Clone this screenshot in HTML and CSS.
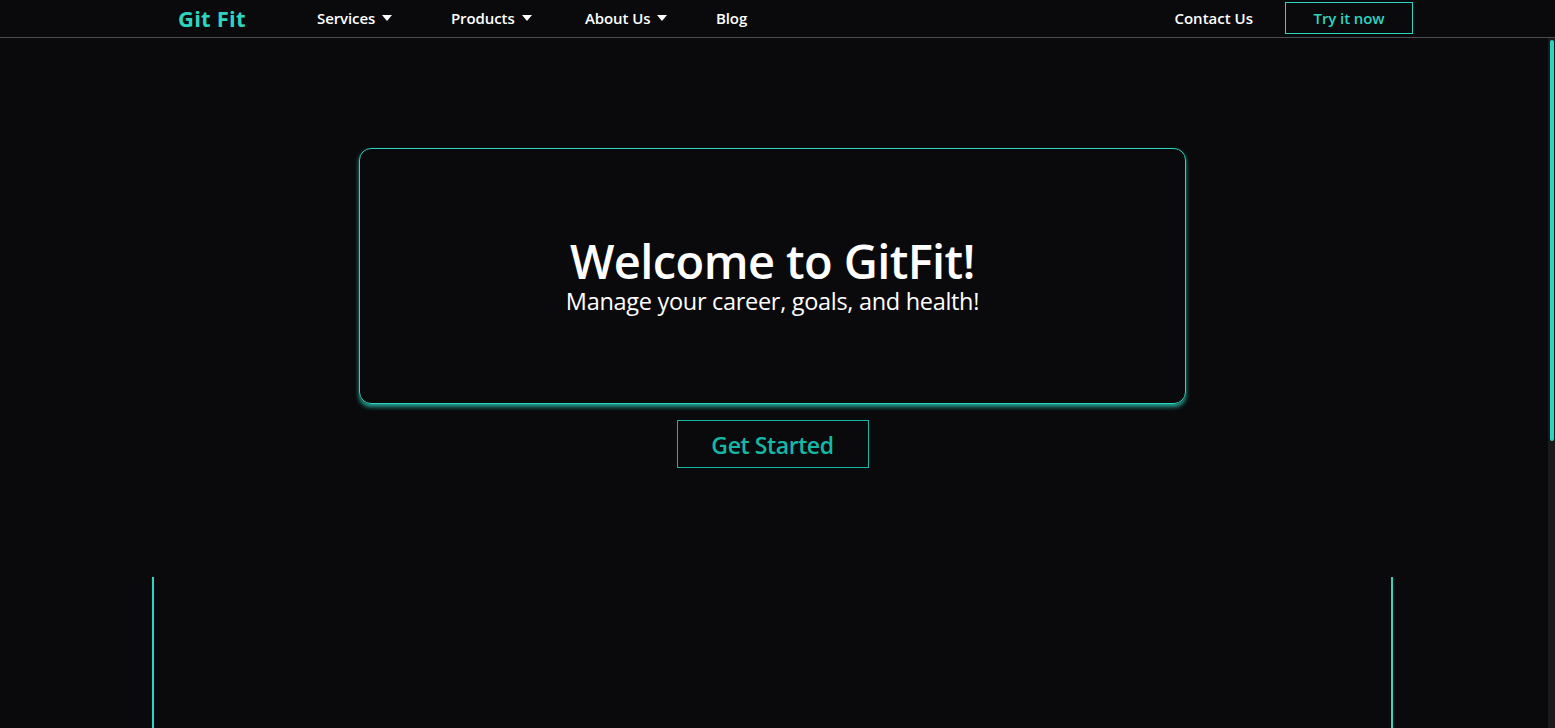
FILE: index.html
```html
<!DOCTYPE html>
<html lang="en">
<head>
<meta charset="utf-8">
<title>Git Fit</title>
<link rel="stylesheet" href="styles.css">
</head>
<body>
<header class="nav">
  <div class="nav-left">
    <a class="logo" href="#">Git Fit</a>
    <a class="nav-item" href="#">Services <svg class="caret" viewBox="0 0 10 6" width="10" height="6"><path d="M0 0H10L5 6Z" fill="#fff"/></svg></a>
    <a class="nav-item" href="#">Products <svg class="caret" viewBox="0 0 10 6" width="10" height="6"><path d="M0 0H10L5 6Z" fill="#fff"/></svg></a>
    <a class="nav-item nav-item-short" href="#">About Us <svg class="caret" viewBox="0 0 10 6" width="10" height="6"><path d="M0 0H10L5 6Z" fill="#fff"/></svg></a>
    <a class="nav-item" href="#">Blog</a>
  </div>
  <div class="nav-right">
    <a class="contact" href="#">Contact Us</a>
    <a class="try" href="#">Try it now</a>
  </div>
</header>
<div class="viewport">
  <main class="main">
    <section class="hero">
      <div class="card">
        <h1 class="title">Welcome to GitFit!</h1>
        <p class="subtitle">Manage your career, goals, and health!</p>
      </div>
      <a class="cta" href="#">Get Started</a>
    </section>
    <section class="frame"></section>
  </main>
  <div class="scrollbar"><div class="thumb"></div></div>
</div>
</body>
</html>
```
FILE: styles.css
```css
* { box-sizing: border-box; }
html, body { margin: 0; height: 100%; }
body {
  background: #0a0a0c;
  color: #fff;
  font-family: "Open Sans", "Noto Sans", sans-serif;
  display: flex;
  flex-direction: column;
  overflow: hidden;
}
a { text-decoration: none; color: inherit; }

.nav {
  height: 38px;
  flex: none;
  display: flex;
  justify-content: space-between;
  align-items: center;
  border-bottom: 1px solid #4a4d52;
  background: #0a0a0c;
  padding-bottom: 1px;
}
.nav-left { display: flex; align-items: center; padding-left: 178px; }
.logo {
  width: 139px;
  color: #2dd4bf;
  font-weight: 700;
  font-size: 22px;
  letter-spacing: 0.2px;
}
.nav-item {
  width: 134px;
  display: flex;
  align-items: center;
  gap: 7px;
  font-weight: 600;
  font-size: 15px;
  letter-spacing: -0.1px;
  color: #fff;
}
.nav-item-short { width: 131px; }
.caret { display: block; }
.nav-right { display: flex; align-items: center; gap: 32px; padding-right: 142px; }
.contact { font-weight: 600; font-size: 15px; letter-spacing: 0; }
.try {
  width: 128px;
  height: 32px;
  margin-top: 0;
  display: flex;
  align-items: center;
  justify-content: center;
  border: 1px solid #2dd4bf;
  color: #2dd4bf;
  font-size: 15px;
  font-weight: 600;
  letter-spacing: -0.1px;
}

.viewport {
  flex: 1;
  min-height: 0;
  display: flex;
}
.main {
  flex: 1;
  overflow: hidden;
  padding-right: 3px;
}
.scrollbar {
  width: 7px;
  flex: none;
  background: #1a1a1d;
  padding: 2px 1px 0 2px;
}
.thumb {
  height: 401px;
  background: #2dd4bf;
  border-radius: 2px;
}

.hero {
  padding-top: 110px;
  display: flex;
  flex-direction: column;
  align-items: center;
}
.card {
  width: 827px;
  height: 256px;
  border: 1px solid #2dd4bf;
  border-radius: 12px;
  box-shadow: 0 3px 4px rgba(45, 212, 191, 0.75);
  display: flex;
  flex-direction: column;
  align-items: center;
  justify-content: center;
}
.title {
  margin: 0;
  font-size: 47px;
  font-weight: 600;
  letter-spacing: -0.6px;
  line-height: 1.05;
}
.subtitle {
  margin: 0;
  font-size: 23.5px;
  letter-spacing: -0.3px;
  line-height: 1.2;
}
.cta {
  margin-top: 16px;
  width: 192px;
  height: 48px;
  display: flex;
  align-items: center;
  justify-content: center;
  border: 1px solid #14b8a6;
  color: #14b8a6;
  font-size: 23px;
  font-weight: 600;
  letter-spacing: -0.4px;
  padding-top: 2px;
}

.frame {
  width: 1241px;
  height: 648px;
  margin: 109px auto 0;
  border-left: 2px solid #2dd4bf;
  border-right: 2px solid #2dd4bf;
}
```
